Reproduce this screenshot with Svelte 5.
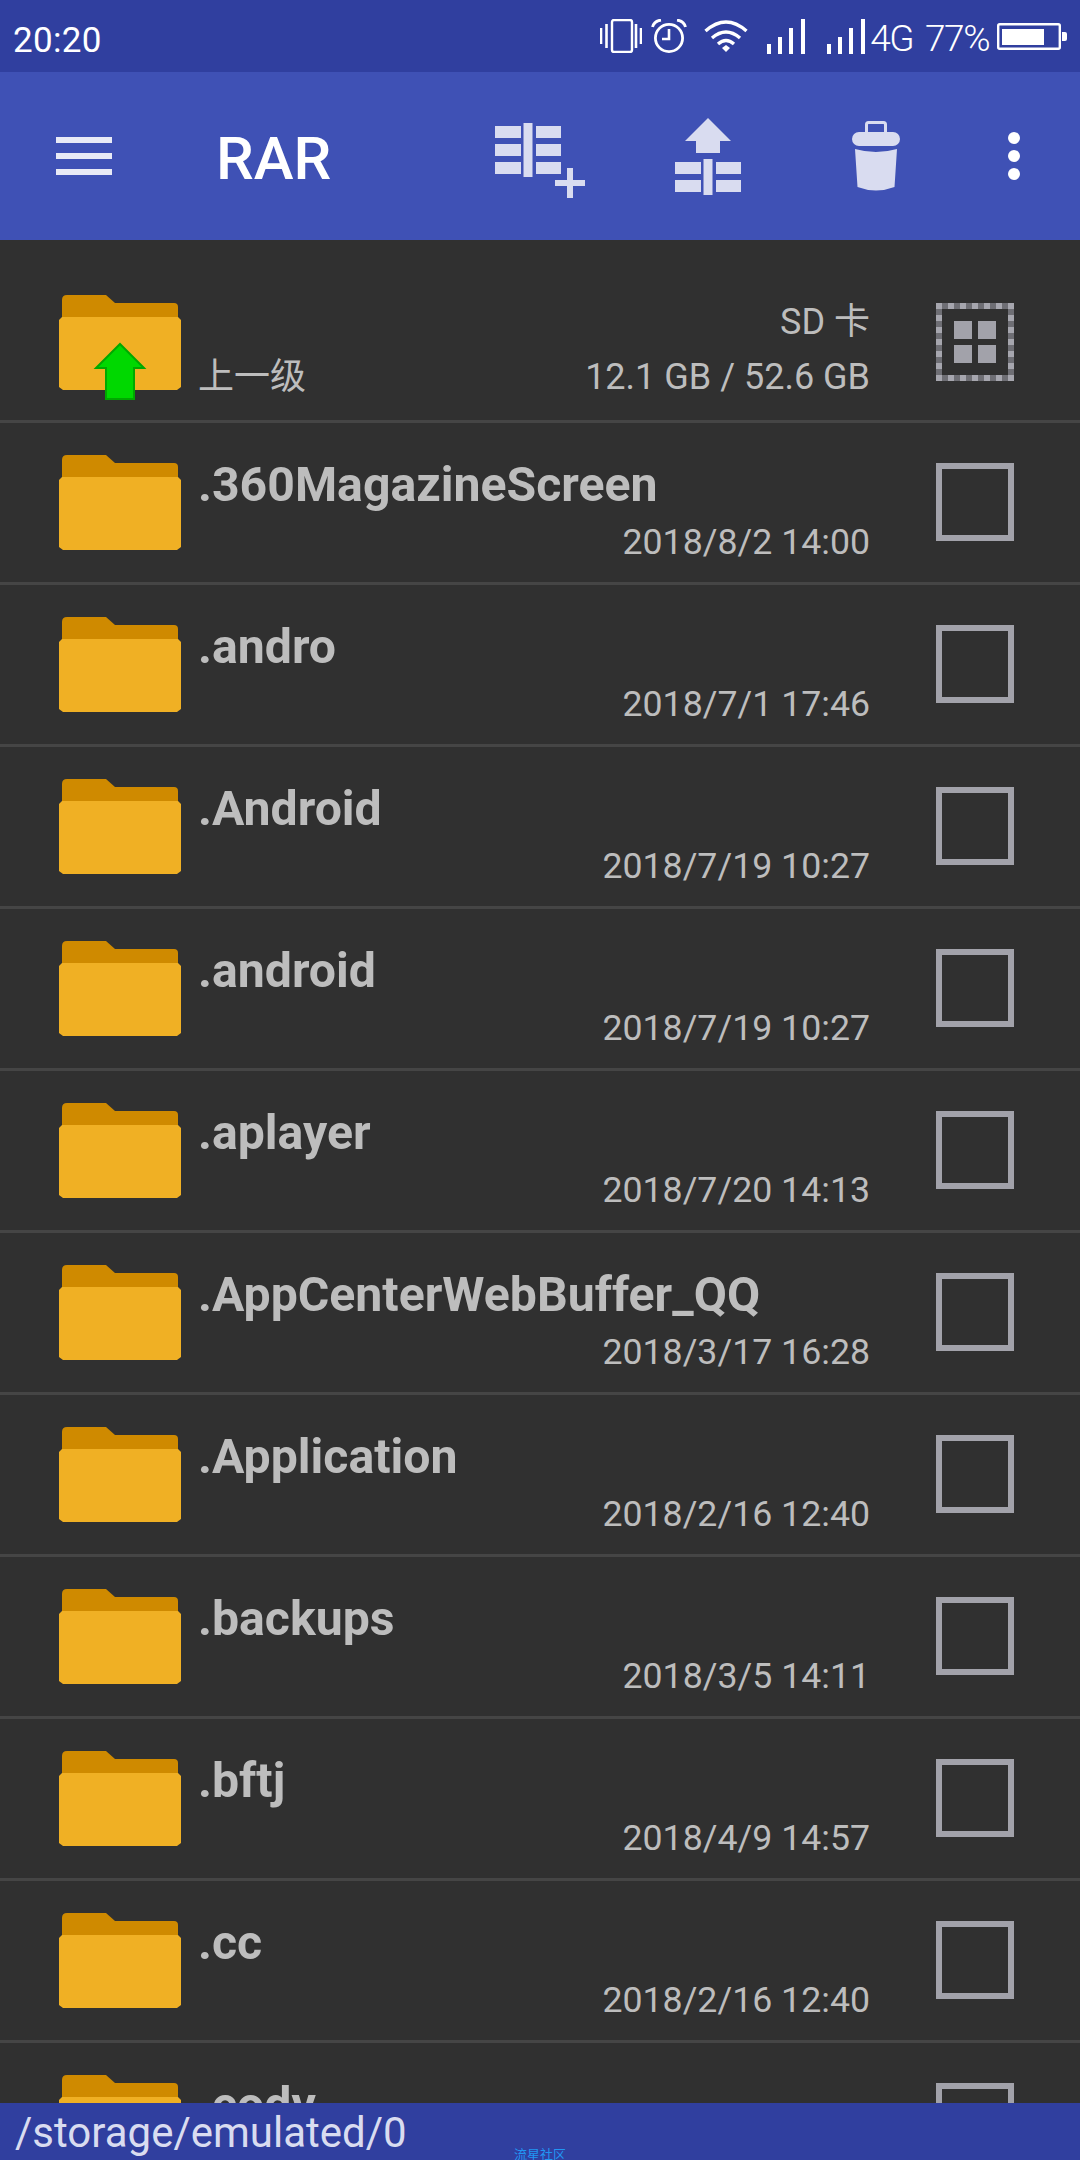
<script>
  const folders = [
    { name: '.360MagazineScreen', date: '2018/8/2 14:00' },
    { name: '.andro', date: '2018/7/1 17:46' },
    { name: '.Android', date: '2018/7/19 10:27' },
    { name: '.android', date: '2018/7/19 10:27' },
    { name: '.aplayer', date: '2018/7/20 14:13' },
    { name: '.AppCenterWebBuffer_QQ', date: '2018/3/17 16:28' },
    { name: '.Application', date: '2018/2/16 12:40' },
    { name: '.backups', date: '2018/3/5 14:11' },
    { name: '.bftj', date: '2018/4/9 14:57' },
    { name: '.cc', date: '2018/2/16 12:40' },
    { name: '.cody', date: '2018/2/16 12:40' }
  ];
</script>

{#snippet folder(up)}
  <svg class="folder" width="122" height="106" viewBox="0 0 122 106">
    <path d="M3 5 Q3 0 8 0 L47 0 L56 8 L115 8 Q119 8 119 12 L119 30 L3 30 Z" fill="#cf8a00" />
    <path d="M3 22 L119 22 L122 25 L122 92 L118 95 L4 95 L0 92 L0 25 Z" fill="#f0b024" />
    {#if up}
      <path d="M61 49 L85 73 L75 73 L75 104 L47 104 L47 73 L37 73 Z" fill="#00d800" stroke="#00a800" stroke-width="2" />
    {/if}
  </svg>
{/snippet}

<div class="page">
  <header class="status">
    <span class="time">20:20</span>
    <div class="status-right">
      <svg class="s-phone" width="42" height="34" viewBox="0 0 42 34" fill="none" stroke="#fff">
        <rect x="12" y="1" width="20" height="32" rx="2" stroke-width="2.4" />
        <path d="M1 9 V25 M6.5 5 V29 M36 5 V29 M41 9 V25" stroke-width="2.6" />
      </svg>
      <svg class="s-alarm" width="36" height="34" viewBox="0 0 36 34" fill="none" stroke="#fff">
        <circle cx="18" cy="19" r="13.6" stroke-width="2.8" />
        <path d="M18 10 V20 H11" stroke-width="2.6" />
        <path d="M1.5 8 Q3 2 10 1 M34.5 8 Q33 2 26 1" stroke-width="2.8" />
      </svg>
      <svg class="s-wifi" width="44" height="34" viewBox="0 0 44 34" fill="none" stroke="#fff">
        <path d="M1.5 12 Q22 -6 42.5 12" stroke-width="3.4" />
        <path d="M8 19 Q22 7 36 19" stroke-width="3.4" />
        <path d="M14 25 Q22 18 30 25" stroke-width="3.4" />
        <path d="M18 29 L22 26 L26 29 L22 33 Z" fill="#fff" stroke="none" />
      </svg>
      <svg class="s-signal" width="38" height="35" viewBox="0 0 38 35" fill="#fff">
        <rect x="0" y="25" width="4" height="10" />
        <rect x="11" y="18" width="4" height="17" />
        <rect x="22" y="9" width="4" height="26" />
        <rect x="34" y="0" width="4" height="35" />
      </svg>
      <svg class="s-signal2" width="38" height="35" viewBox="0 0 38 35" fill="#fff">
        <rect x="0" y="25" width="4" height="10" />
        <rect x="11" y="18" width="4" height="17" />
        <rect x="22" y="9" width="4" height="26" />
        <rect x="34" y="0" width="4" height="35" />
      </svg>
      <span class="net">4G</span>
      <span class="pct">77%</span>
      <svg class="s-batt" width="70" height="27" viewBox="0 0 70 27" fill="#fff">
        <rect x="1.2" y="1.2" width="61.6" height="24.6" rx="1.5" fill="none" stroke="#fff" stroke-width="2.4" />
        <rect x="5" y="6" width="42" height="16" />
        <path d="M65 9 H68 Q70 9 70 11 V16 Q70 18 68 18 H65 Z" />
      </svg>
    </div>
  </header>

  <div class="toolbar">
    <div class="menu"><span></span><span></span><span></span></div>
    <h1>RAR</h1>
    <svg class="t-add" width="90" height="168" viewBox="0 0 90 168" fill="#d9dcf0">
      <rect x="0" y="54" width="26" height="12" />
      <rect x="0" y="72" width="26" height="12" />
      <rect x="0" y="90" width="26" height="12" />
      <rect x="28.5" y="51" width="9" height="54" />
      <rect x="41" y="54" width="25" height="12" />
      <rect x="41" y="72" width="25" height="12" />
      <rect x="41" y="90" width="25" height="12" />
      <rect x="72" y="96" width="6" height="30" />
      <rect x="60" y="108" width="30" height="6" />
    </svg>
    <svg class="t-extract" width="66" height="168" viewBox="0 0 66 168" fill="#d9dcf0">
      <path d="M33 46 L56 69 L45 69 L45 81 L21 81 L21 69 L10 69 Z" />
      <rect x="0" y="90" width="26" height="12" />
      <rect x="0" y="108" width="26" height="12" />
      <rect x="28.5" y="87" width="9" height="36" />
      <rect x="41" y="90" width="25" height="12" />
      <rect x="41" y="108" width="25" height="12" />
    </svg>
    <svg class="t-trash" width="48" height="168" viewBox="0 0 48 168" fill="#d9dcf0">
      <rect x="14.5" y="50.5" width="19" height="13" rx="2" fill="none" stroke="#d9dcf0" stroke-width="3" />
      <rect x="0" y="60" width="48" height="14" rx="7" />
      <path d="M3 77 Q24 83 45 77 L42.5 115 Q24 122 5.5 115 Z" />
    </svg>
    <svg class="t-more" width="12" height="168" viewBox="0 0 12 168" fill="#fff">
      <circle cx="6" cy="66" r="6" />
      <circle cx="6" cy="84" r="6" />
      <circle cx="6" cy="102" r="6" />
    </svg>
  </div>

  <div class="list">
    <div class="row top">
      {@render folder(true)}
      <span class="up">上一级</span>
      <div class="storage">
        <span class="sd">SD 卡</span>
        <span class="size">12.1 GB / 52.6 GB</span>
      </div>
      <svg class="selectall" width="78" height="78" viewBox="0 0 78 78">
        <rect x="3" y="3" width="72" height="72" fill="none" stroke="#6e6e74" stroke-width="6" />
        <rect x="3" y="3" width="72" height="72" fill="none" stroke="#a6a6ae" stroke-width="6" stroke-dasharray="6 6" stroke-dashoffset="3" />
        <rect x="18" y="18" width="18" height="18" fill="#a2a2aa" />
        <rect x="42" y="18" width="18" height="18" fill="#a2a2aa" />
        <rect x="18" y="42" width="18" height="18" fill="#a2a2aa" />
        <rect x="42" y="42" width="18" height="18" fill="#a2a2aa" />
      </svg>
    </div>
    {#each folders as item}
      <div class="row">
        {@render folder(false)}
        <div class="info">
          <span class="name">{item.name}</span>
          <span class="date">{item.date}</span>
        </div>
        <span class="check"></span>
      </div>
    {/each}
  </div>

  <footer class="path">
    <span>/storage/emulated/0</span>
    <span class="mark">流星社区</span>
  </footer>
</div>

<style>
  :global(body) {
    margin: 0;
    background: #303030;
  }

  .page {
    display: flex;
    flex-direction: column;
    height: 2160px;
    overflow: hidden;
    font-family: Roboto, "Noto Sans CJK SC", sans-serif;
  }

  .status {
    flex: none;
    display: flex;
    align-items: center;
    justify-content: space-between;
    height: 72px;
    padding: 0 13px;
    background: #303f9f;
    color: #fff;
  }

  .time {
    margin-top: 10px;
    font-size: 35px;
    line-height: 44px;
    letter-spacing: 0.3px;
  }

  .status-right {
    display: flex;
    align-items: center;
  }

  .s-alarm { margin-left: 9px; }
  .s-wifi { margin-left: 17px; }
  .s-signal { margin-left: 19px; }
  .s-signal2 { margin-left: 22px; }

  .net,
  .pct {
    margin-top: 6px;
    font-size: 37px;
    font-weight: 300;
    line-height: 44px;
    letter-spacing: -1.5px;
  }

  .net { margin-left: 5px; }
  .pct { margin-left: 12px; }
  .s-batt { margin-left: 8px; }

  .toolbar {
    flex: none;
    display: flex;
    align-items: center;
    height: 168px;
    padding: 0 60px 0 56px;
    background: #3f51b5;
  }

  .menu {
    display: flex;
    flex-direction: column;
    gap: 10px;
    width: 56px;
  }

  .menu span {
    height: 6px;
    background: #e8eaf6;
  }

  h1 {
    flex: 1;
    margin: 5px 0 0 104px;
    color: #fff;
    font-size: 60px;
    font-weight: 500;
  }

  .t-extract { margin-left: 90px; }
  .t-trash { margin-left: 111px; }
  .t-more { margin-left: 108px; }

  .list {
    flex: 1;
    overflow: hidden;
  }

  .row {
    box-sizing: border-box;
    display: flex;
    height: 162px;
    padding: 32px 66px 0 59px;
    border-bottom: 3px solid #454545;
    color: #bdbdbd;
  }

  .row.top {
    height: 183px;
    padding-top: 55px;
  }

  .folder {
    flex: none;
  }

  .info {
    flex: 1;
    display: flex;
    flex-direction: column;
    margin: 2px 66px 0 17px;
  }

  .name {
    font-size: 48.2px;
    font-weight: 700;
    line-height: 56px;
  }

  .date {
    margin-top: 7px;
    font-size: 35.7px;
    line-height: 44px;
    text-align: right;
  }

  .check {
    flex: none;
    box-sizing: border-box;
    width: 78px;
    height: 78px;
    margin-top: 8px;
    border: 6px solid #a2a2aa;
  }

  .up {
    align-self: flex-start;
    margin: 60px 0 0 17px;
    font-size: 36px;
    line-height: 44px;
  }

  .storage {
    flex: 1;
    display: flex;
    flex-direction: column;
    align-items: flex-end;
    gap: 11px;
    margin: 5px 66px 0 0;
    font-size: 36px;
    line-height: 44px;
  }

  .selectall {
    flex: none;
    margin-top: 8px;
  }

  .path {
    position: relative;
    flex: none;
    height: 57px;
    padding-left: 15px;
    background: #303f9f;
    color: #d9dcf0;
    font-size: 42px;
    line-height: 60px;
  }

  .mark {
    position: absolute;
    left: 514px;
    bottom: -2px;
    color: #2196f3;
    font-size: 13px;
    line-height: 14px;
  }
</style>
